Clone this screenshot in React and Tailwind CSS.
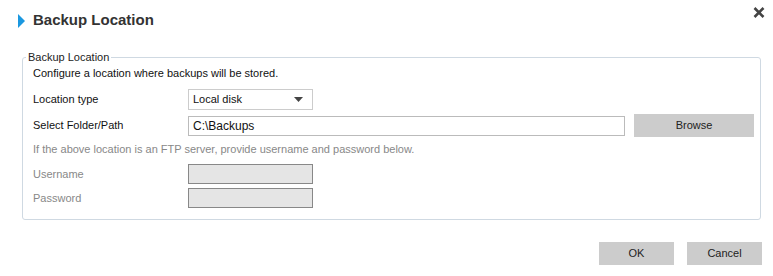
const Row = ({ label, muted, children, className = "" }) => (
  <div className={`flex items-center ${className}`}>
    <span className={`w-[155px] shrink-0 ${muted ? "text-[#888]" : "text-[#111]"}`}>{label}</span>
    {children}
  </div>
);

const App = () => {
  return (
    <div className="w-[773px] h-[276px] bg-white text-[11px] font-['Liberation_Sans',Arial,sans-serif]">
      {/* Header */}
      <div className="flex items-start justify-between h-[50px] pt-[7px] pl-[18px] pr-[8px]">
        <div className="flex items-center h-[20px] mt-[3px]">
          <svg width="8" height="14" viewBox="0 0 8 14" className="mt-[2px]">
            <path d="M0 0 L7 7 L0 14 Z" fill="#1b98e0" />
          </svg>
          <h1 className="ml-[7px] text-[15px] leading-[20px] font-bold text-[#333]">Backup Location</h1>
        </div>
        <svg width="12" height="11" viewBox="0 0 12 11">
          <path d="M1.5 1 L10.5 10 M10.5 1 L1.5 10" stroke="#444" strokeWidth="2.6" />
        </svg>
      </div>

      {/* Settings group */}
      <fieldset className="ml-[22px] w-[739px] border border-[#cfd9e2] rounded-[3px]">
        <legend className="ml-[3px] px-[2px] leading-[14px] text-[#222]">Backup Location</legend>
        <div className="pl-[10px] pr-[6px] pb-[11px]">
          <p className="leading-[18px] text-[#111]">Configure a location where backups will be stored.</p>

          <Row label="Location type" className="mt-[7px] h-[21px]">
            <div className="w-[125px] h-[21px] border border-[#ccc] bg-white flex items-center justify-between pl-[4px] pr-[9px] text-[#111]">
              <span>Local disk</span>
              <svg width="9" height="5" viewBox="0 0 9 5">
                <path d="M0 0 L9 0 L4.5 5 Z" fill="#444" />
              </svg>
            </div>
          </Row>

          <Row label="Select Folder/Path" className="mt-[4px] h-[23px]">
            <div className="w-[437px] h-[20px] border border-[#bbb] bg-white flex items-center pl-[4px] text-[12px] text-[#111]">
              C:\Backups
            </div>
            <button className="ml-[9px] w-[120px] h-[23px] bg-[#ccc] text-[#222]">Browse</button>
          </Row>

          <p className="mt-[4px] leading-[16px] text-[#888]">
            If the above location is an FTP server, provide username and password below.
          </p>

          <Row label="Username" muted className="mt-[7px] h-[20px]">
            <div className="w-[125px] h-[20px] border border-[#888] bg-[#e5e5e5]" />
          </Row>
          <Row label="Password" muted className="mt-[4px] h-[20px]">
            <div className="w-[125px] h-[20px] border border-[#888] bg-[#e5e5e5]" />
          </Row>
        </div>
      </fieldset>

      {/* Actions */}
      <div className="flex justify-end gap-[13px] mt-[22px] pr-[11px]">
        <button className="w-[75px] h-[23px] bg-[#ccc] text-[#222]">OK</button>
        <button className="w-[75px] h-[23px] bg-[#ccc] text-[#222]">Cancel</button>
      </div>
    </div>
  );
};

export default App;
